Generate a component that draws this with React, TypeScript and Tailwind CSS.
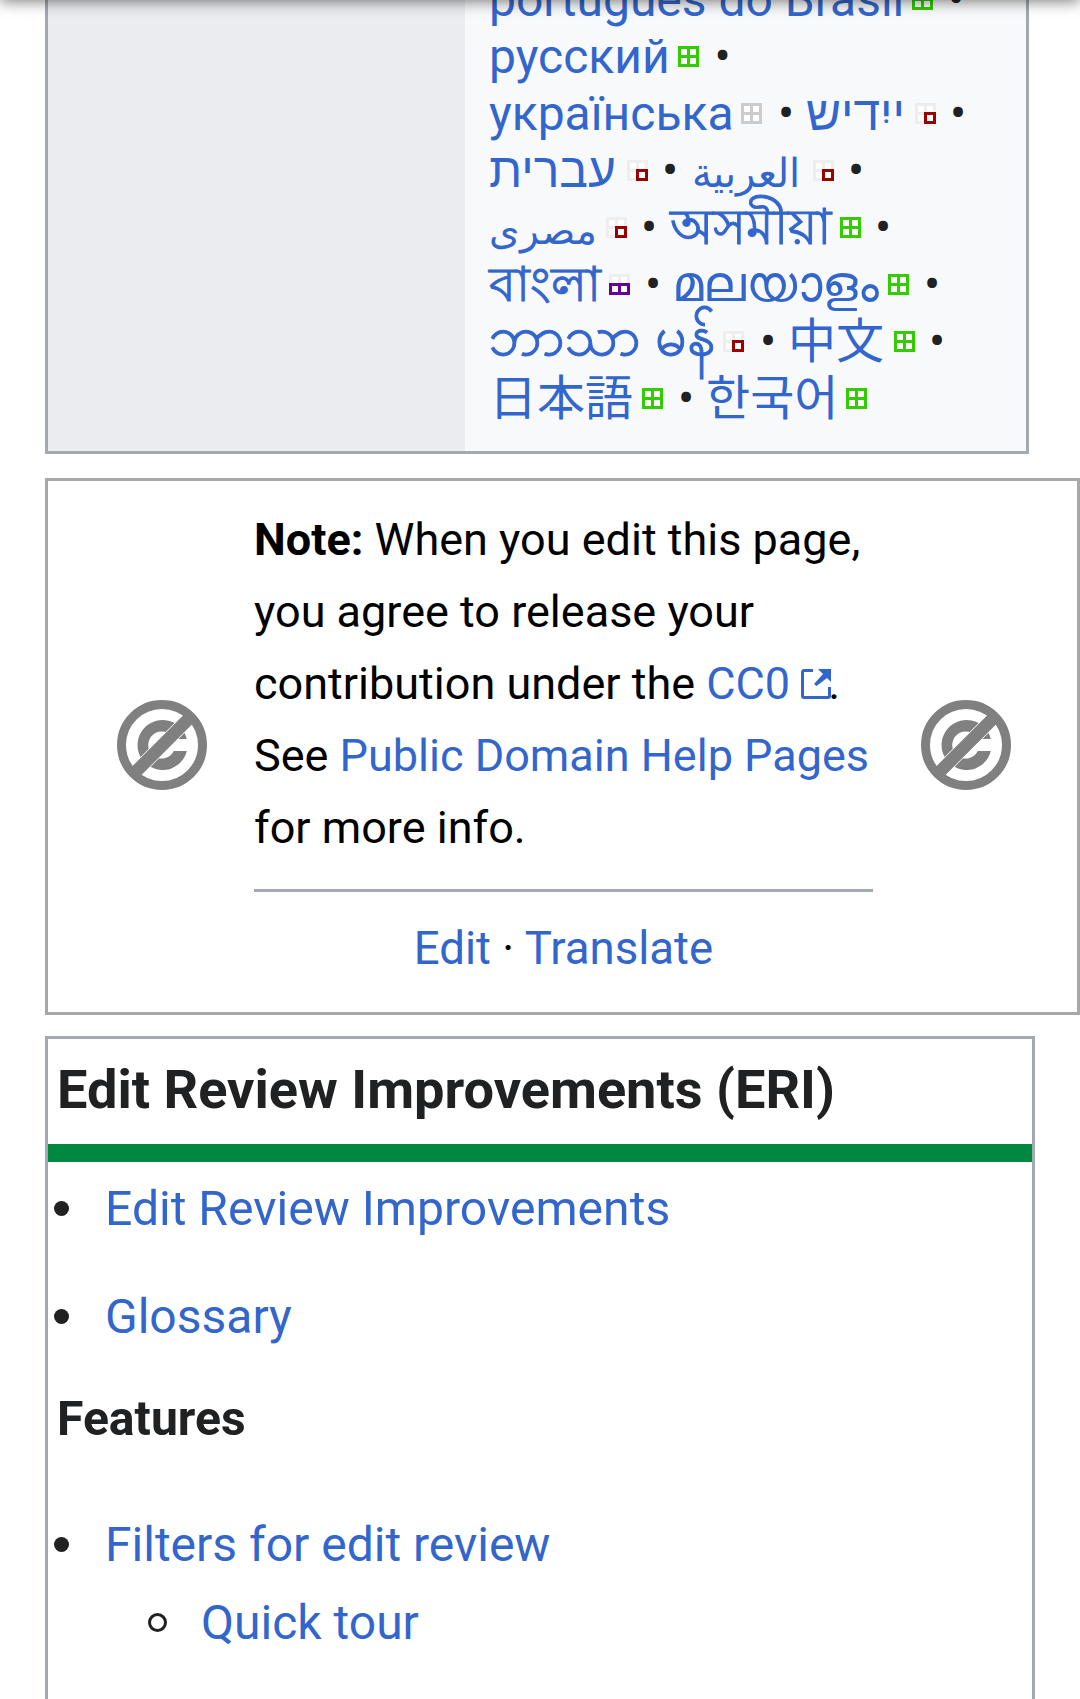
import type { ReactNode } from "react";

type Kind = "full" | "grey" | "quarter" | "half";

function Quality({ kind }: { kind: Kind }) {
  const base = kind === "full" ? "#33cc00" : kind === "grey" ? "#cccccc" : "#eeeeee";
  return (
    <svg width="21" height="21" viewBox="0 0 21 21" className="mt-[-1px] shrink-0">
      <rect width="21" height="21" fill={base} />
      <path d="M3 3h6v6H3zM12 3h6v6h-6zM3 12h6v6H3zM12 12h6v6h-6z" fill="#fff" />
      {kind === "quarter" && <path d="M10.5 10.5h9v9h-9z" fill="#fff" stroke="#990000" strokeWidth="3" />}
      {kind === "half" && (
        <g fill="#fff" stroke="#660099" strokeWidth="3">
          <path d="M1.5 10.5h9v9h-9z" />
          <path d="M10.5 10.5h9v9h-9z" />
        </g>
      )}
    </svg>
  );
}

function Lang({ w, kind, gap, children }: { w: string; kind: Kind; gap?: string; children: ReactNode }) {
  return (
    <>
      <a className={`${w} h-[57px] shrink-0 whitespace-nowrap text-[#3366cc]`}>{children}</a>
      <Quality kind={kind} />
      {gap && <span className={`${gap} flex shrink-0 justify-center`}>•</span>}
    </>
  );
}

function Row({ children }: { children: ReactNode }) {
  return <div className="flex h-[57px] items-center leading-[57px]">{children}</div>;
}

function PublicDomain() {
  return (
    <svg width="90" height="90" viewBox="0 0 90 90" className="shrink-0">
      <path d="M69.8 39A25 25 0 1 0 69.8 51H56.8A13.5 13.5 0 1 1 56.8 39Z" fill="#808080" />
      <path d="M16 74.5L74.5 16" stroke="#fff" strokeWidth="14" />
      <circle cx="45" cy="45" r="40.5" fill="none" stroke="#808080" strokeWidth="9" />
      <path d="M16 74.5L74.5 16" stroke="#808080" strokeWidth="12.6" />
    </svg>
  );
}

function External() {
  return (
    <svg width="30" height="30" viewBox="0 0 30 30" className="mr-[-3px] ml-[11px] inline-block align-baseline">
      <path d="M12 1.5H3A1.5 1.5 0 0 0 1.5 3V27A1.5 1.5 0 0 0 3 28.5H27A1.5 1.5 0 0 0 28.5 27V18" fill="none" stroke="#3366cc" strokeWidth="3" />
      <path d="M17 0H30V13L26 9L15.5 17L13 15L22 5Z" fill="#3366cc" />
    </svg>
  );
}

export default function App() {
  return (
    <div className="relative h-[1699px] w-[1080px] overflow-hidden bg-white font-['Roboto','Noto_Sans','Noto_Sans_CJK_JP',sans-serif] text-[48px] text-[#202122]">
      <div className="pointer-events-none absolute inset-x-0 -top-[20px] z-10 h-[20px] shadow-[0_1px_15px_rgba(0,0,0,0.55)]" />
      <section className="ml-[45px] flex h-[454px] w-[984px] border-3 border-t-0 border-[#a2a9b1]">
        <div className="w-[417px] bg-[#eaecf0]" />
        <div className="flex-1 bg-[#f8f9fa] pl-[24px]">
          <div className="-mt-[29px]">
            <Row><Lang w="w-[423px]" kind="full" gap="w-[46px]">português do Brasil</Lang></Row>
            <Row><Lang w="w-[189px]" kind="full" gap="w-[47px]">русский</Lang></Row>
            <Row>
              <Lang w="w-[252px]" kind="grey" gap="w-[48px]">українська</Lang>
              <Lang w="w-[105px]" kind="quarter" gap="w-[44px]"><span className="-ml-[4px]">ייִדיש</span></Lang>
            </Row>
            <Row>
              <Lang w="w-[138px]" kind="quarter" gap="w-[44px]">עברית</Lang>
              <Lang w="w-[121px]" kind="quarter" gap="w-[44px]"><span className="text-[39.8px]">العربية</span></Lang>
            </Row>
            <Row>
              <Lang w="w-[117px]" kind="quarter" gap="w-[44px]"><span className="text-[39px]">مصرى</span></Lang>
              <Lang w="w-[169px]" kind="full" gap="w-[44px]"><span className="-ml-[1px] text-[49.5px] [-webkit-text-stroke:0.9px_#3366cc]">অসমীয়া</span></Lang>
            </Row>
            <Row>
              <Lang w="w-[120px]" kind="half" gap="w-[46px]"><span className="[-webkit-text-stroke:0.9px_#3366cc]">বাংলা</span></Lang>
              <Lang w="w-[212px]" kind="full" gap="w-[46px]"><span className="-ml-[4px] text-[50px]">മലയാളം</span></Lang>
            </Row>
            <Row>
              <Lang w="w-[234px]" kind="quarter" gap="w-[48px]"><span className="inline-block h-[57px] -translate-y-[5px] text-[55px] [-webkit-text-stroke:1px_#3366cc]">ဘာသာ မန်</span></Lang>
              <Lang w="w-[102px]" kind="full" gap="w-[44px]"><span className="-ml-[4px]">中文</span></Lang>
            </Row>
            <Row>
              <Lang w="w-[153px]" kind="full" gap="w-[46px]">日本語</Lang>
              <Lang w="w-[137px]" kind="full"><span className="-ml-[3px]">한국어</span></Lang>
            </Row>
          </div>
        </div>
      </section>

      <section className="mt-[24px] ml-[45px] flex h-[537px] w-[1035px] border-3 border-[#a8a8a8] text-[45px] leading-[72px] text-black">
        <div className="mt-[219px] ml-[69px] w-[137px]"><PublicDomain /></div>
        <div className="w-[619px] pt-[23px]">
          <p className="h-[360px] whitespace-nowrap">
            <b>Note:</b> When you edit this page,<br />you agree to release your<br />contribution under the <a className="text-[#3366cc]">CC0<External /></a>.<br />See <a className="text-[#3366cc]">Public Domain Help Pages</a><br />for more info.
          </p>
          <div className="mt-[25px] h-[3px] bg-[#a2a9b1]" />
          <p className="mt-[21px] text-center text-[45.6px]"><a className="text-[#3366cc]">Edit</a> · <a className="text-[#3366cc]">Translate</a></p>
        </div>
        <div className="mt-[219px] ml-[48px]"><PublicDomain /></div>
      </section>

      <section className="mt-[21px] ml-[45px] h-[700px] w-[990px] border-3 border-[#a2a9b1]">
        <h2 className="h-[105px] pt-[16px] pl-[9px] text-[54.15px] leading-[70px] font-bold">Edit Review Improvements (ERI)</h2>
        <div className="h-[18px] bg-[#00893e]" />
        <div className="mt-[16px] flex h-[60px] items-center pl-[6px]"><i className="size-[15px] rounded-full bg-[#202122]" /><a className="mt-[2px] ml-[36px] text-[48.1px] text-[#3366cc]">Edit Review Improvements</a></div>
        <div className="mt-[48px] flex h-[60px] items-center pl-[6px]"><i className="size-[15px] rounded-full bg-[#202122]" /><a className="mt-[2px] ml-[36px] text-[#3366cc]">Glossary</a></div>
        <h3 className="mt-[43px] h-[60px] pl-[9px] text-[48.1px] leading-[60px] font-bold">Features</h3>
        <div className="mt-[65px] flex h-[60px] items-center pl-[6px]"><i className="size-[15px] rounded-full bg-[#202122]" /><a className="mt-[2px] ml-[36px] text-[#3366cc]">Filters for edit review</a></div>
        <div className="mt-[18px] flex h-[60px] items-center pl-[100px]"><i className="size-[19px] rounded-full border-3 border-[#202122]" /><a className="mt-[2px] ml-[34px] text-[#3366cc]">Quick tour</a></div>
      </section>
    </div>
  );
}
